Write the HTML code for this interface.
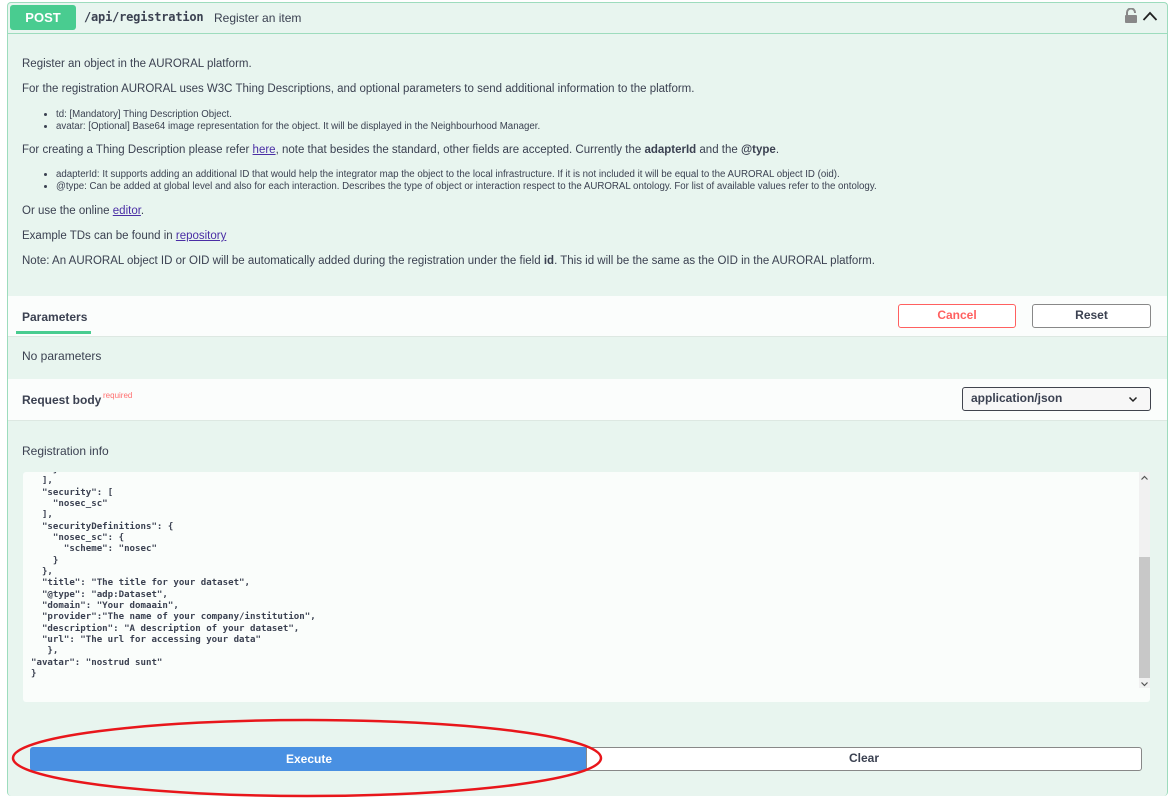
<!DOCTYPE html>
<html><head><meta charset="utf-8"><style>
*{margin:0;padding:0;box-sizing:border-box}
body{width:1173px;height:800px;background:#fff;font-family:"Liberation Sans",Arial,sans-serif;color:#3b4151;position:relative;overflow:hidden}
.a{position:absolute}
.box{left:7px;top:2px;width:1161px;height:794px;border:1px solid #9ddcbd;border-radius:4px;background:#e8f5ef;border-bottom:none}
.hdr{left:8px;top:3px;width:1159px;height:31px;border-bottom:1px solid #9ddcbd}
.post{left:10px;top:5px;width:66px;height:25px;background:#49cc90;color:#fff;font-weight:bold;font-size:13px;text-align:center;line-height:25px;border-radius:3px}
.path{left:84px;top:10px;font-family:"DejaVu Sans Mono",monospace;font-weight:bold;font-size:12px;letter-spacing:-0.2px;color:#3b4151}
.sum{left:214px;top:11px;font-size:12px}
p.t{position:absolute;left:22px;font-size:11.5px;color:#3b4151;white-space:nowrap}
ul.s{position:absolute;left:56px;font-size:9.7px;line-height:12px;color:#3b4151;white-space:nowrap}
a{color:#4a2ea5;text-decoration:underline}
.wbar{left:8px;width:1159px;background:#fbfdfc;border-bottom:1px solid #dde8e2}
.btn{height:24px;border:2px solid #888;border-radius:3px;text-align:center;font-weight:bold;font-size:12px;line-height:20px;background:#fff}
.pre{position:absolute;left:23px;top:472px;width:1127px;height:230px;background:#fafdfb;border-radius:3px;overflow:hidden}
pre{position:absolute;left:8px;top:-7px;font-family:"DejaVu Sans Mono",monospace;font-size:9.1px;line-height:11.33px;color:#3b4151;font-weight:bold}
</style></head><body>
<div class="a box"></div>
<div class="a hdr"></div>
<div class="a post">POST</div>
<div class="a path">/api/registration</div>
<div class="a sum">Register an item</div>
<svg class="a" style="left:1124px;top:8px" width="14" height="16" viewBox="0 0 14 16"><path d="M3 7V4.5a4 4 0 0 1 8 0V5" fill="none" stroke="#888" stroke-width="2"/><rect x="1" y="7" width="12" height="8" rx="1" fill="#888"/></svg>
<svg class="a" style="left:1142px;top:10px" width="16" height="12" viewBox="0 0 16 12"><path d="M1.5 10L8 3l6.5 7" fill="none" stroke="#222" stroke-width="1.8"/></svg>

<p class="t" style="top:58px">Register an object in the AURORAL platform.</p>
<p class="t" style="top:83px">For the registration AURORAL uses W3C Thing Descriptions, and optional parameters to send additional information to the platform.</p>
<ul class="s" style="top:109px"><li>td: [Mandatory] Thing Description Object.</li><li>avatar: [Optional] Base64 image representation for the object. It will be displayed in the Neighbourhood Manager.</li></ul>
<p class="t" style="top:144px">For creating a Thing Description please refer <a>here</a>, note that besides the standard, other fields are accepted. Currently the <b>adapterId</b> and the <b>@type</b>.</p>
<ul class="s" style="top:169px"><li>adapterId: It supports adding an additional ID that would help the integrator map the object to the local infrastructure. If it is not included it will be equal to the AURORAL object ID (oid).</li><li>@type: Can be added at global level and also for each interaction. Describes the type of object or interaction respect to the AURORAL ontology. For list of available values refer to the ontology.</li></ul>
<p class="t" style="top:205px">Or use the online <a>editor</a>.</p>
<p class="t" style="top:230px">Example TDs can be found in <a>repository</a></p>
<p class="t" style="top:255px">Note: An AURORAL object ID or OID will be automatically added during the registration under the field <b>id</b>. This id will be the same as the OID in the AURORAL platform.</p>

<div class="a wbar" style="top:296px;height:41px"></div>
<div class="a" style="left:22px;top:310px;font-size:12px;font-weight:bold">Parameters</div>
<div class="a" style="left:16px;top:331px;width:75px;height:3px;background:#49cc90"></div>
<div class="a btn" style="left:898px;top:304px;width:118px;border-color:#ff6060;color:#ff6060;border-width:1.5px">Cancel</div>
<div class="a btn" style="left:1032px;top:304px;width:119px;border-width:1.5px">Reset</div>
<div class="a" style="left:22px;top:349px;font-size:12px">No parameters</div>

<div class="a wbar" style="top:379px;height:42px"></div>
<div class="a" style="left:22px;top:393px;font-size:12px;font-weight:bold">Request body</div>
<div class="a" style="left:103px;top:391px;font-size:8px;color:#ff6f6f">required</div>
<div class="a btn" style="left:962px;top:387px;width:189px;text-align:left;padding-left:8px;border-color:#41444e;border-width:1.5px;font-size:12px;line-height:21px;background:#f7f7f7">application/json</div>
<svg class="a" style="left:1128px;top:395px" width="10" height="8" viewBox="0 0 10 8"><path d="M1.5 2.5L5 6l3.5-3.5" fill="none" stroke="#222" stroke-width="1.5"/></svg>

<div class="a" style="left:22px;top:444px;font-size:12px">Registration info</div>
<div class="pre"><pre>    }
  ],
  "security": [
    "nosec_sc"
  ],
  "securityDefinitions": {
    "nosec_sc": {
      "scheme": "nosec"
    }
  },
  "title": "The title for your dataset",
  "@type": "adp:Dataset",
  "domain": "Your domaain",
  "provider":"The name of your company/institution",
  "description": "A description of your dataset",
  "url": "The url for accessing your data"
   },
"avatar": "nostrud sunt"
}</pre></div>
<div class="a" style="left:1139px;top:472px;width:11px;height:216px;background:#f1f1f1"></div>
<div class="a" style="left:1139px;top:557px;width:11px;height:121px;background:#c8c8c8"></div>
<svg class="a" style="left:1140px;top:475px" width="9" height="6" viewBox="0 0 9 6"><path d="M1.5 4.5L4.5 1.5l3 3" fill="none" stroke="#555" stroke-width="1.2"/></svg>
<svg class="a" style="left:1140px;top:681px" width="9" height="6" viewBox="0 0 9 6"><path d="M1.5 1.5L4.5 4.5l3-3" fill="none" stroke="#555" stroke-width="1.2"/></svg>

<div class="a btn" style="left:30px;top:747px;width:558px;background:#4990e2;border-color:#4990e2;color:#fff;border-radius:3px 0 0 3px">Execute</div>
<div class="a btn" style="left:586px;top:747px;width:556px;border-color:#888;border-width:1.5px;border-radius:0 3px 3px 0">Clear</div>
<svg class="a" style="left:0;top:710px" width="620" height="90"><ellipse cx="307" cy="48" rx="294" ry="38" fill="none" stroke="#e8161b" stroke-width="2.5"/></svg>
</body></html>
